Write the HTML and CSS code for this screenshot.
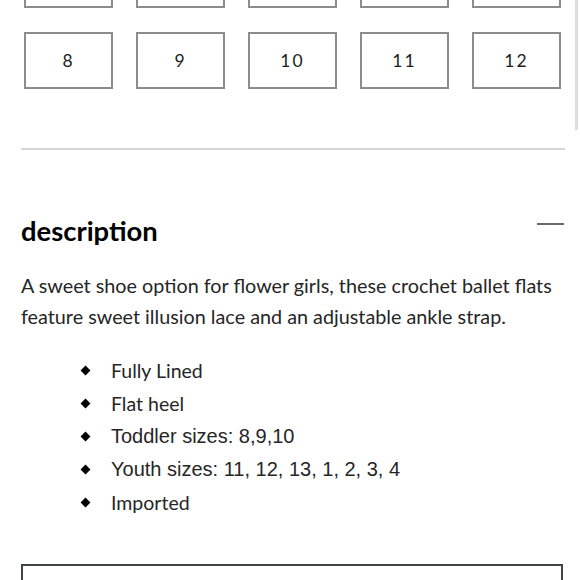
FILE: index.html
```html
<!DOCTYPE html>
<html>
<head>
<meta charset="utf-8">
<link rel="stylesheet" href="styles.css">
</head>
<body>
<div class="page">
  <div class="sizes">
    <div class="size"></div>
    <div class="size"></div>
    <div class="size"></div>
    <div class="size"></div>
    <div class="size"></div>
    <div class="size">8</div>
    <div class="size">9</div>
    <div class="size">10</div>
    <div class="size">11</div>
    <div class="size">12</div>
  </div>
  <hr class="divider">
  <div class="desc-head">
    <h2 class="desc-title">description</h2>
    <span class="minus"></span>
  </div>
  <p class="desc-text">A sweet shoe option for flower girls, these crochet ballet flats feature sweet illusion lace and an adjustable ankle strap.</p>
  <ul class="features">
    <li>Fully Lined</li>
    <li>Flat heel</li>
    <li class="arial">Toddler sizes: 8,9,10</li>
    <li class="arial">Youth sizes: 11, 12, 13, 1, 2, 3, 4</li>
    <li>Imported</li>
  </ul>
  <div class="action-box"></div>
  <div class="scroll-track"></div>
</div>
</body>
</html>
```
FILE: styles.css
```css
* { box-sizing: border-box; }
html, body { margin: 0; padding: 0; background: #fff; }
body { width: 580px; height: 580px; overflow: hidden; font-family: Lato, "Open Sans", sans-serif; color: #1e1e1e; }
.page { position: relative; width: 580px; height: 580px; overflow: hidden; }

.sizes {
  display: grid;
  grid-template-columns: repeat(5, 89px);
  column-gap: 23px;
  row-gap: 24px;
  padding-left: 24px;
  margin-top: -49px;
}
.size {
  height: 57px;
  border: 2px solid #8c8c8c;
  display: flex;
  align-items: center;
  justify-content: center;
  font-size: 17.5px;
  letter-spacing: 2px;
  color: #222;
  padding-bottom: 1px;
}

.divider {
  margin: 59px 15px 0 21px;
  border: 0;
  height: 2px;
  background: #d6d6d6;
}

.desc-head {
  display: flex;
  justify-content: space-between;
  align-items: flex-start;
  margin: 66px 16px 0 21px;
}
.desc-title {
  margin: 0;
  font-size: 27.4px;
  line-height: 30px;
  font-weight: 700;
  color: #000;
}
.minus {
  width: 27px;
  height: 2px;
  background: #6a6a6a;
  margin-top: 7px;
}

.desc-text {
  margin: 24px 16px 0 21px;
  font-size: 19.8px;
  line-height: 31px;
  color: #262626;
}

.features {
  list-style: none;
  margin: 22px 0 0 0;
  padding: 0 0 0 81px;
}
.features li {
  position: relative;
  padding-left: 30px;
  font-size: 19.5px;
  line-height: 33px;
  color: #262626;
}
.features li::before {
  content: "";
  position: absolute;
  left: 1px;
  top: 13px;
  width: 7px;
  height: 7px;
  background: #000;
  transform: rotate(45deg);
}
.features li.arial {
  font-family: "Liberation Sans", Arial, sans-serif;
  font-size: 20px;
}

.action-box {
  margin: 45px 17px 0 21px;
  height: 60px;
  border: 2px solid #3f4242;
}

.scroll-track {
  position: absolute;
  top: 0;
  right: 2px;
  width: 3px;
  height: 130px;
  background: #dcdcdc;
}
```
